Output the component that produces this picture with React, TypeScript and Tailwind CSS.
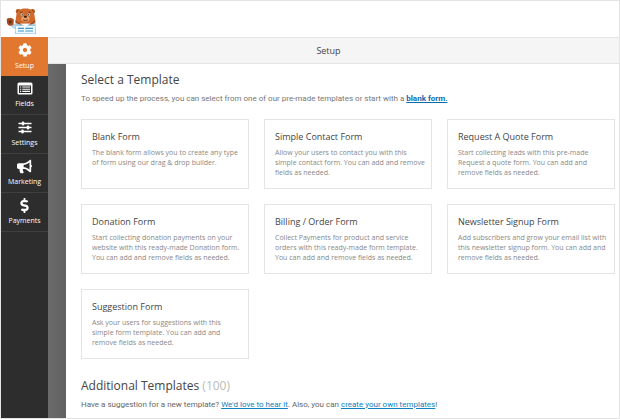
import React, { useState } from 'react';
import { FaBullhorn, FaCog, FaDollarSign } from 'react-icons/fa';

interface NavItem {
  label: string;
  icon: React.ReactNode;
}

interface Template {
  name: string;
  description: string;
}

const FieldsIcon = () => (
  <svg viewBox="0 0 16 13" className="w-4 h-[13px]" aria-hidden="true">
    <rect x="0.5" y="0.5" width="15" height="12" rx="1.5" fill="#fff" />
    <rect x="2" y="3.5" width="12" height="7.5" fill="#2d2d2d" />
    <path d="M3 5h1.2M3 7.2h1.2M3 9.4h1.2M5.3 5H13M5.3 7.2H13M5.3 9.4H13" stroke="#fff" strokeWidth="1.1" />
  </svg>
);

const SlidersIcon = () => (
  <svg viewBox="0 0 14 13" className="w-3.5 h-[13px]" fill="none" stroke="#fff" aria-hidden="true">
    <path d="M0.5 2.5h13M0.5 6.5h13M0.5 10.5h13" strokeWidth="1.3" />
    <path d="M5 1.8v1.4M10 5.8v1.4M4.500 9.800v1.400" strokeWidth="2.6" strokeLinecap="round" />
  </svg>
);

const BearLogo = () => (
  <svg viewBox="0 0 30 28" className="w-[30px] h-7" role="img" aria-label="WPForms">
    {/* Head and ears */}
    <circle cx="12.2" cy="4.4" r="2.4" fill="#b4541f" />
    <circle cx="26.6" cy="4.4" r="2.4" fill="#b4541f" />
    <circle cx="12.4" cy="4.6" r="1" fill="#7c3616" />
    <circle cx="26.4" cy="4.6" r="1" fill="#7c3616" />
    <path d="M10.200 9C10.500 4 13.500 1.500 19.400 1.500S28.300 4 28.600 9l.7 5c0 3-3.500 4-9.900 4s-9.900-1-9.900-4z" fill="#cf6a2c" />
    <path d="M9.700 13c1.500 2.500 5 3.500 9.700 3.500s8.200-1 9.700-3.500l.2 2.500c-1 2-4 3-9.900 3s-8.900-1-9.900-3z" fill="#a54f20" />
    <ellipse cx="19.400" cy="11.800" rx="4.200" ry="3" fill="#e8a066" />
    <ellipse cx="19.400" cy="9.800" rx="1.700" ry="1.100" fill="#3a211a" />
    <path d="M17 12.800q2.400 1.600 4.800 0" stroke="#6b3015" strokeWidth="0.9" fill="none" />
    <path d="M14 5.500l2.500-.4M22.300 5.100l2.500.4" stroke="#6b3015" strokeWidth="0.8" />
    <circle cx="16" cy="7.600" r="1.200" fill="#fff" />
    <circle cx="22.800" cy="7.600" r="1.200" fill="#fff" />
    <circle cx="16.200" cy="7.700" r=".8" fill="#20303b" />
    <circle cx="22.600" cy="7.700" r=".8" fill="#20303b" />
    {/* Raised paw */}
    <path d="M4.500 17.500l5.500-1v5.500c-3 0-5-2-5.500-4.500z" fill="#b9d9ea" />
    <path d="M.8 12.500q1-2 2.500-1.200 1.500-1.200 2.600.1 2-.2 1.900 2l-.3 3.800q-1.500 2.300-4.500 1.200Q.5 17.500.8 12.500z" fill="#a34e20" />
    <circle cx="4.200" cy="14.800" r="1.600" fill="#6d3015" />
    {/* Form held in front */}
    <path d="M9.500 16l4.500 1.500h11l4.500-1.500.5 11H9z" fill="#a4cce4" />
    <path d="M14 16.500l5.400 3 5.400-3z" fill="#fff" />
    <path d="M10 19h19v7.200H10z" fill="#eef8fd" />
    <path d="M12 21.300h6M19.300 21.300H27M12 24h6M19.300 24H27" stroke="#3f98cb" strokeWidth="1.200" />
  </svg>
);

const NAV_ITEMS: NavItem[] = [
  { label: 'Setup', icon: <FaCog size={14} /> },
  { label: 'Fields', icon: <FieldsIcon /> },
  { label: 'Settings', icon: <SlidersIcon /> },
  { label: 'Marketing', icon: <FaBullhorn size={15} /> },
  { label: 'Payments', icon: <FaDollarSign size={15} /> },
];

const TEMPLATES: Template[] = [
  { name: 'Blank Form', description: 'The blank form allows you to create any type\nof form using our drag & drop builder.' },
  { name: 'Simple Contact Form', description: 'Allow your users to contact you with this\nsimple contact form. You can add and remove\nfields as needed.' },
  { name: 'Request A Quote Form', description: 'Start collecting leads with this pre-made\nRequest a quote form. You can add and\nremove fields as needed.' },
  { name: 'Donation Form', description: 'Start collecting donation payments on your\nwebsite with this ready-made Donation form.\nYou can add and remove fields as needed.' },
  { name: 'Billing / Order Form', description: 'Collect Payments for product and service\norders with this ready-made form template.\nYou can add and remove fields as needed.' },
  { name: 'Newsletter Signup Form', description: 'Add subscribers and grow your email list with\nthis newsletter signup form. You can add and\nremove fields as needed.' },
  { name: 'Suggestion Form', description: 'Ask your users for suggestions with this\nsimple form template. You can add and\nremove fields as needed.' },
];

const App: React.FC = () => {
  const [activeItem, setActiveItem] = useState('Setup');

  return (
    <div className="min-h-screen flex flex-col border border-[#e4e4e4] bg-white font-['Open_Sans','Noto_Sans',sans-serif] text-[#444]">
      <header className="h-9 shrink-0 px-[5px] pt-1 flex items-center">
        <BearLogo />
      </header>

      <div className="flex-1 flex">
        {/* Sidebar */}
        <nav className="w-[47px] shrink-0 bg-[#2d2d2d] border-t border-[#e27730]">
          {NAV_ITEMS.map((item) => (
            <button
              key={item.label}
              onClick={() => setActiveItem(item.label)}
              className={`w-full pt-1 flex flex-col items-center gap-[3px] text-[7px] leading-[10px] text-white border-b ${
                activeItem === item.label ? 'h-[38px] bg-[#e27730] border-[#e27730]' : 'h-[39px] border-[#404040]'
              }`}
            >
              <span className="h-4 flex items-center justify-center">{item.icon}</span>
              {item.label}
            </button>
          ))}
        </nav>

        <div className="flex-1 min-w-0 flex flex-col">
          <div className="h-[27px] shrink-0 pr-2.5 flex items-center justify-center bg-[#f5f5f5] border-y border-[#e4e4e4] text-[9px]">
            Setup
          </div>

          <div className="flex-1 flex">
            <div className="w-[18px] shrink-0 bg-linear-to-r from-[#6b6b6b] to-[#616161]" />
            <main className="flex-1 min-w-0 pl-[15px] pr-1 pt-2">
              <h1 className="text-[12px] leading-4">Select a Template</h1>
              <p className="mt-[5px] font-[Roboto,sans-serif] text-[8px] leading-3 text-[#777]">
                To speed up the process, you can select from one of our pre-made templates or start with a{' '}
                <a href="#blank" className="font-bold text-[#0e6cad] underline">blank form.</a>
              </p>

              <div className="mt-[14px] grid grid-cols-3 gap-[15px]">
                {TEMPLATES.map((template) => (
                  <a key={template.name} href="#template" className="block h-[70px] pl-2.5 pt-[11px] border border-[#e4e4e4]">
                    <h2 className="text-[9px] leading-3">{template.name}</h2>
                    <p className="mt-[5px] text-[7px] leading-[10px] text-[#888] whitespace-pre-line">
                      {template.description}
                    </p>
                  </a>
                ))}
              </div>

              <h2 className="mt-[19px] text-[12px] leading-4">
                Additional Templates <span className="text-[#bbb]">(100)</span>
              </h2>
              <p className="mt-[5px] font-[Roboto,sans-serif] text-[8px] leading-3 text-[#666]">
                Have a suggestion for a new template?{' '}
                <a href="#suggest" className="text-[#0e7fc0] underline">We'd love to hear it</a>. Also, you can{' '}
                <a href="#create" className="text-[#0e7fc0] underline">create your own templates</a>!
              </p>
            </main>
          </div>
        </div>
      </div>
    </div>
  );
};

export default App;
